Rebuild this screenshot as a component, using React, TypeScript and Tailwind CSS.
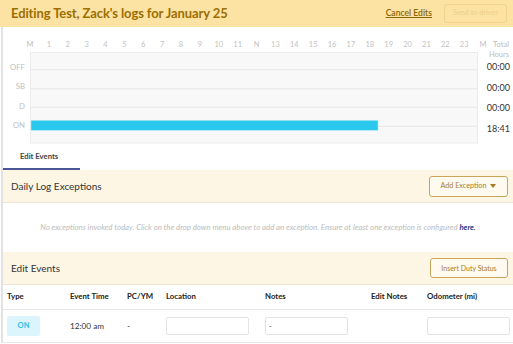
import React from "react";

const hours = ["M","1","2","3","4","5","6","7","8","9","10","11","N","13","14","15","16","17","18","19","20","21","22","23","M"];

export default function App() {
  const font = { fontFamily: "Lato, 'Noto Sans', sans-serif" };
  return (
    <div className="w-[513px] h-[344px] overflow-hidden bg-white" style={font}>
      {/* Header */}
      <div className="h-[27px] bg-[#fce2a3] flex items-center justify-between pl-[11px] pr-[6px]">
        <div className="text-[13px] font-bold text-[#9d6f02] tracking-[-0.1px]">Editing Test, Zack's logs for January 25</div>
        <div className="flex items-center">
          <span className="text-[8.6px] font-semibold text-[#8d6608] underline mr-[12px] whitespace-nowrap">Cancel Edits</span>
          <div className="h-[19px] w-[63px] border border-[#f1d28e] rounded-[3px] flex items-center justify-center text-[7.3px] text-[#efcf8a] whitespace-nowrap">Send to driver</div>
        </div>
      </div>
      <div className="ml-[1px] border-l-[2px] border-[#e2e2e2]">
        {/* Chart */}
        <div className="pt-[11px] pb-[2px] flex">
          <div className="w-[27px]" />
          <div className="w-[453px]">
            <div className="h-[14px] flex justify-between">
              {hours.map((h, i) => (
                <div key={i} className="w-0 flex justify-center">
                  <span className="text-[7.5px] text-[#c2c2c2] leading-[14px] whitespace-nowrap">{h}</span>
                </div>
              ))}
            </div>
            <div className="flex">
              <div className="w-0 relative">
                <div className="absolute right-[5px] top-0 flex flex-col items-end pt-[6px]">
                  {["OFF","SB","D","ON"].map((l) => (
                    <div key={l} className="h-[19.5px] flex items-center text-[7.8px] text-[#c0c0c0]">{l}</div>
                  ))}
                </div>
              </div>
              <svg width="448" height="92" className="block">
                <rect x="0.5" y="0.5" width="447" height="90.5" fill="#f8f8f8" stroke="#ececec" />
                <line x1="1" x2="447" y1="17.8" y2="17.8" stroke="#e6e6e6" />
                <line x1="1" x2="447" y1="36.8" y2="36.8" stroke="#e6e6e6" />
                <line x1="1" x2="447" y1="55.2" y2="55.2" stroke="#e6e6e6" />
                <line x1="1" x2="447" y1="74.3" y2="74.3" stroke="#e6e6e6" />
                <rect x="1" y="68.3" width="347" height="10" fill="#2bc8ee" />
                <rect x="1" y="68.3" width="347" height="10" fill="none" stroke="#b4e8f6" strokeWidth="0.6" />
              </svg>
            </div>
          </div>
          <div className="flex-1 flex flex-col items-end pr-[3px]">
            <div className="mt-[2px] pr-[1px] text-[7.5px] text-[#bcbcbc] leading-[10px] text-right">Total<br />Hours</div>
            <div className="mt-[-3.5px] flex flex-col items-end">
              {["00:00","00:00","00:00","18:41"].map((v, i) => (
                <div key={i} className="h-[20.5px] flex items-center text-[9px] text-[#333]">{v}</div>
              ))}
            </div>
          </div>
        </div>
        {/* Tab */}
        <div className="flex">
          <div className="w-[77px] h-[24px] border-b-[2px] border-[#4b5694] flex items-center pl-[17px]">
            <span className="text-[7.7px] font-bold text-[#444]">Edit Events</span>
          </div>
        </div>
        {/* Daily Log Exceptions */}
        <div className="h-[33px] bg-[#fef6e5] border-b border-[#eee5d2] flex items-center justify-between pl-[8px] pr-[5px]">
          <span className="text-[10px] text-[#333]">Daily Log Exceptions</span>
          <div className="h-[21px] w-[79px] border border-[#c9a55c] rounded-[3px] flex items-center justify-center gap-[4px] text-[7.2px] text-[#a97c24] bg-[#fffaf0] whitespace-nowrap">
            <span>Add Exception</span>
            <svg width="6" height="4" viewBox="0 0 6 4"><path d="M0 0H6L3 4Z" fill="#a97c24" /></svg>
          </div>
        </div>
        <div className="h-[49px] flex items-center justify-center">
          <span className="text-[7.8px] italic text-[#bcbcbc] whitespace-nowrap">No exceptions invoked today. Click on the drop down menu above to add an exception. Ensure at least one exception is configured <span className="font-bold text-[#2d3b88]">here.</span></span>
        </div>
        {/* Edit Events */}
        <div className="h-[33px] bg-[#fef6e5] border-b border-[#eee5d2] flex items-center justify-between pl-[8px] pr-[5px]">
          <span className="text-[10px] text-[#333]">Edit Events</span>
          <div className="h-[20px] w-[78px] border border-[#c9a55c] rounded-[3px] flex items-center justify-center text-[7px] text-[#a97c24] bg-[#fffaf0] whitespace-nowrap">Insert Duty Status</div>
        </div>
        <div className="h-[25px] border-b border-[#e8e8e8] grid grid-cols-[63px_57px_39px_99px_106px_56px_1fr] items-center pl-[4px] text-[7.8px] font-bold text-[#222] whitespace-nowrap">
          <span>Type</span>
          <span>Event Time</span>
          <span>PC/YM</span>
          <span>Location</span>
          <span>Notes</span>
          <span>Edit Notes</span>
          <span>Odometer (mi)</span>
        </div>
        <div className="h-[33px] border-b border-[#e8e8e8] grid grid-cols-[63px_57px_39px_99px_106px_56px_1fr] items-center pl-[4px] text-[8.2px] text-[#333]">
          <div className="w-[33px] h-[20px] bg-[#dcf4fc] rounded-[2px] flex items-center justify-center text-[7.5px] font-bold text-[#2cc1ea]">ON</div>
          <span className="whitespace-nowrap">12:00 am</span>
          <span>-</span>
          <div className="w-[83px] h-[18px] border border-[#e3e3e3] rounded-[2px]" />
          <div className="w-[83px] h-[18px] border border-[#e3e3e3] rounded-[2px] flex items-center pl-[3px] text-[7px]">-</div>
          <span />
          <div className="w-[83px] h-[18px] border border-[#e3e3e3] rounded-[2px]" />
        </div>
      </div>
    </div>
  );
}
